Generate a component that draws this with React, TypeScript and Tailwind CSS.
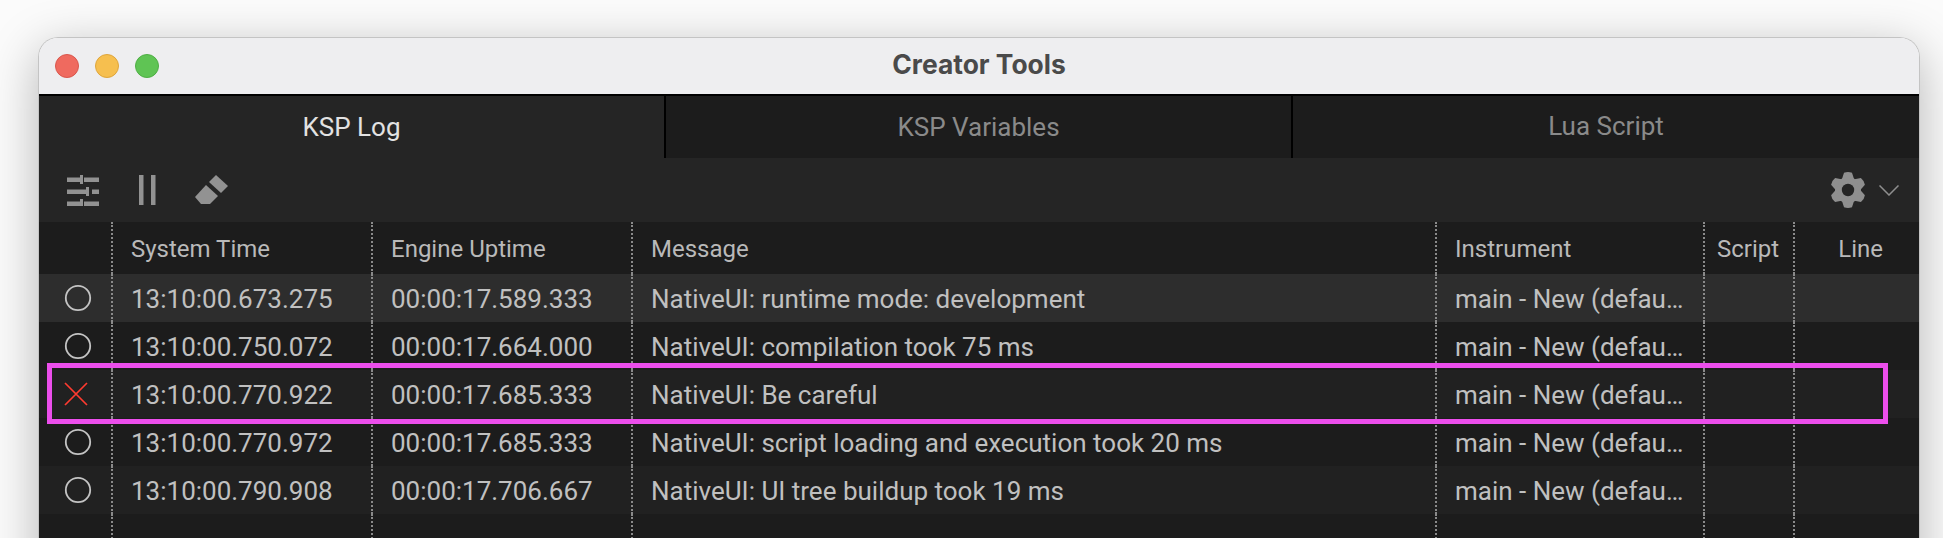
import React from "react";

const rows = [
  { t: "13:10:00.673.275", u: "00:00:17.589.333", m: "NativeUI: runtime mode: development", bg: "bg-[#2d2d2d]", err: false },
  { t: "13:10:00.750.072", u: "00:00:17.664.000", m: "NativeUI: compilation took 75 ms", bg: "bg-[#1c1c1c]", err: false },
  { t: "13:10:00.770.922", u: "00:00:17.685.333", m: "NativeUI: Be careful", bg: "bg-[#212121]", err: true },
  { t: "13:10:00.770.972", u: "00:00:17.685.333", m: "NativeUI: script loading and execution took 20 ms", bg: "bg-[#1c1c1c]", err: false },
  { t: "13:10:00.790.908", u: "00:00:17.706.667", m: "NativeUI: UI tree buildup took 19 ms", bg: "bg-[#212121]", err: false },
];

const dot = "border-l-2 border-dotted border-[#8a8a8a] h-full flex items-center shrink-0 overflow-hidden whitespace-nowrap pt-[2px]";

function Cells({ c }: { c: (string | React.ReactNode)[] }) {
  return (
    <>
      <div className="w-[72px] h-full flex items-center shrink-0">{c[0]}</div>
      <div className={`${dot} w-[260px] pl-[18px]`}>{c[1]}</div>
      <div className={`${dot} w-[260px] pl-[18px]`}>{c[2]}</div>
      <div className={`${dot} w-[804px] pl-[18px]`}>{c[3]}</div>
      <div className={`${dot} w-[268px] pl-[18px]`}>{c[4]}</div>
      <div className={`${dot} w-[90px] pl-[12px]`}>{c[5]}</div>
      <div className={`${dot} w-[126px] justify-end pr-[36px]`}>{c[6]}</div>
    </>
  );
}

function Circle() {
  return (
    <svg width="28" height="28" viewBox="0 0 28 28" className="ml-[25px]">
      <circle cx="14" cy="14" r="12.2" fill="none" stroke="#c4c4c4" strokeWidth="1.8" />
    </svg>
  );
}

function Cross() {
  return (
    <svg width="24" height="24" viewBox="0 0 24 24" className="ml-[25px]">
      <path d="M1 1 L23 23 M23 1 L1 23" fill="none" stroke="#ff3b30" strokeWidth="1.7" />
    </svg>
  );
}

function Gear() {
  const lobes = [0, 60, 120, 180, 240, 300];
  return (
    <svg width="36" height="38" viewBox="0 0 36 38">
      <g fill="#8f8f8f">
        <circle cx="18" cy="19" r="13" />
        {lobes.map((a) => (
          <path key={a} d="M12 8 L14 1.8 Q18 0.2 22 1.8 L24 8 Z" transform={`rotate(${a} 18 19)`} strokeLinejoin="round" />
        ))}
      </g>
      <circle cx="18" cy="19" r="6.2" fill="#252525" />
    </svg>
  );
}

function Sliders() {
  return (
    <svg width="32" height="32" viewBox="0 0 32 32" fill="#929292">
      <rect x="0" y="3.5" width="13" height="4.5" />
      <rect x="13" y="1" width="3" height="9" />
      <rect x="17" y="3.5" width="15" height="4.5" />
      <rect x="0" y="15.5" width="19" height="4.5" />
      <rect x="19" y="13" width="3" height="9" />
      <rect x="25" y="15.5" width="7" height="4.5" />
      <rect x="0" y="27.5" width="13" height="4.5" />
      <rect x="13" y="25" width="3" height="7" />
      <rect x="17" y="27.5" width="15" height="4.5" />
    </svg>
  );
}

function Pause() {
  return (
    <svg width="18" height="30" viewBox="0 0 18 30" fill="#929292">
      <rect x="0" y="0" width="4.5" height="30" />
      <rect x="12" y="0" width="4.5" height="30" />
    </svg>
  );
}

function Eraser() {
  return (
    <svg width="34" height="30" viewBox="0 0 34 30" fill="#929292">
      <path d="M21 0 L33 11 L26 18 L14 7 Z" />
      <path d="M11 10 L23 21 L15 29 L6 29 L0 22 Z" />
    </svg>
  );
}

export default function App() {
  return (
    <div className="w-[1943px] h-[538px] overflow-hidden bg-[#fbfbfb] pt-[37px] pl-[38px] [font-family:Roboto,sans-serif]">
      <div className="w-[1882px] h-[560px] rounded-t-[20px] overflow-hidden border border-[#c4c4c4] border-b-0 shadow-[0_12px_50px_rgba(0,0,0,0.28)] flex flex-col">
        <div className="relative h-[56px] shrink-0 bg-[#eeeef0] flex items-center justify-center">
          <div className="absolute left-[16px] top-[16px] flex gap-[16px]">
            <div className="w-[24px] h-[24px] rounded-full bg-[#ef6a5f] border border-[#d9574d]" />
            <div className="w-[24px] h-[24px] rounded-full bg-[#f6bf4f] border border-[#dea53c]" />
            <div className="w-[24px] h-[24px] rounded-full bg-[#5fc454] border border-[#4fae45]" />
          </div>
          <span className="[font-family:Inter,sans-serif] font-bold text-[26.4px] text-[#4a4a4a] pb-[3px]">Creator Tools</span>
        </div>

        <div className="h-[64px] shrink-0 flex border-t-2 border-black text-[26px] bg-[#1c1c1c]">
          <div className="w-[625px] h-full bg-[#252525] text-[#e2e2e2] flex items-center justify-center border-r-2 border-black box-content pb-[2px]">KSP Log</div>
          <div className="w-[625px] h-full text-[#8a8a8a] flex items-center justify-center border-r-2 border-black box-content pb-[2px]">KSP Variables</div>
          <div className="flex-1 h-full text-[#8a8a8a] flex items-center justify-center pb-[2px]">Lua Script</div>
        </div>

        <div className="h-[64px] shrink-0 bg-[#252525] flex items-center pl-[28px] pr-[20px]">
          <Sliders />
          <div className="ml-[40px]"><Pause /></div>
          <div className="ml-[38px]"><Eraser /></div>
          <div className="ml-auto flex items-center gap-[13px]">
            <Gear />
            <svg width="20" height="11" viewBox="0 0 20 11">
              <path d="M0.5 0.5 L10 10 L19.5 0.5" fill="none" stroke="#8f8f8f" strokeWidth="1.5" />
            </svg>
          </div>
        </div>

        <div className="relative flex-1 bg-[#1c1c1c] flex flex-col text-[26px] text-[#c0c0c0] [&>div]:shrink-0">
          <div className="h-[52px] flex text-[#b9b9b9] text-[24px]">
            <Cells c={["", "System Time", "Engine Uptime", "Message", "Instrument", "Script", "Line"]} />
          </div>
          {rows.map((r) => (
            <div key={r.t} className={`h-[48px] flex ${r.bg}`}>
              <Cells c={[r.err ? <Cross /> : <Circle />, r.t, r.u, r.m, "main - New (defau…", "", ""]} />
            </div>
          ))}
          <div className="h-[48px] flex">
            <Cells c={["", "", "", "", "", "", ""]} />
          </div>
          <div className="absolute left-[8px] top-[141px] w-[1841px] h-[61px] border-[5px] border-[#ec4eec]" />
        </div>
      </div>
    </div>
  );
}
